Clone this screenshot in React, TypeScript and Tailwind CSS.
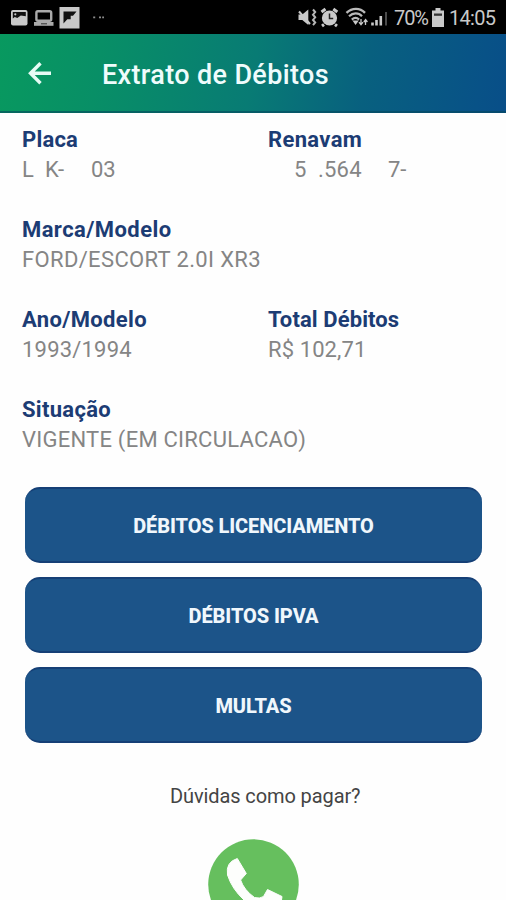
import React from "react";

type FieldProps = {
  label: string;
  labelClass?: string;
  valueClass?: string;
  children: React.ReactNode;
};

const Field = ({ label, labelClass, valueClass, children }: FieldProps) => (
  <div className="h-[90px]">
    <div
      className={`h-[30px] text-[22px] leading-[31px] font-bold text-[#1c3c74] whitespace-nowrap ${labelClass ?? ""}`}
    >
      {label}
    </div>
    <div
      className={`h-[31px] text-[22px] leading-[31px] text-[#858585] whitespace-nowrap ${valueClass ?? ""}`}
    >
      {children}
    </div>
  </div>
);

const StatusBar = () => (
  <div className="flex h-[34px] items-center bg-black text-[#c9c9c9]">
    <svg width="110" height="34" viewBox="0 0 110 34" fill="none">
      {/* imagen */}
      <rect x="11" y="10" width="16.5" height="15.5" rx="2" fill="#c9c9c9" />
      <path d="M12.8 12h13v4.3l-5-.8-3.500 2.500-2.500-1-2 1.500z" fill="#111" />
      <circle cx="15.3" cy="14.3" r="1.1" fill="#c9c9c9" />
      {/* laptop */}
      <rect x="36.4" y="11.2" width="14.8" height="9.6" rx="1.5" stroke="#aaa" strokeWidth="2.4" />
      <path d="M34 22h19.5v3.800H34z" fill="#aaa" />
      <path d="M41 23.8h6" stroke="#333" />
      {/* flipboard */}
      <rect x="59.5" y="7" width="20" height="21.5" fill="#c9c9c9" />
      <path d="M63.500 11.500h13l-3.500 4.300h-2.300v3.400h-3.400l-3.800 4.300z" fill="#111" />
      <path d="M93.2 17.3h2M99 17.3h2M102.2 17.3h1.8" stroke="#8c8c8c" strokeWidth="1.8" />
    </svg>
    <svg className="ml-auto" width="92" height="34" viewBox="296 0 92 34" fill="none">
      {/* vibrar */}
      <path d="M297.500 14.500h3.800l6-5v15.500l-6-5h-3.800z" fill="#c9c9c9" />
      <path d="M298 11.500l11 12.500" stroke="#c9c9c9" strokeWidth="2" />
      <path d="M312 9.500l2.200 2.600-2.200 2.600 2.200 2.600-2.200 2.600 2.200 2.600-2.200 2.600" stroke="#b5b5b5" strokeWidth="2" />
      {/* alarma */}
      <path d="M320.500 12l4-3M336.300 12l-4-3M323 24.500l-2 1.500M334 24.500l2 1.500" stroke="#c9c9c9" strokeWidth="3" />
      <circle cx="328.5" cy="18" r="7.6" fill="#c9c9c9" />
      <path d="M328.500 13.500v5h3.700" stroke="#222" strokeWidth="1.5" />
      {/* wifi */}
      <path d="M345.500 12.800c5.500-5.200 13.500-5.200 18.500 0" stroke="#b9b9b9" strokeWidth="2.4" />
      <path d="M348 16.300c4-3.800 9.500-3.800 13 0M350.800 19.600c2.500-2.200 5-2.200 7.300 0" stroke="#b9b9b9" strokeWidth="2.2" />
      <path d="M351.500 20.600h6.200l-3.100 4.400z" fill="#c9c9c9" />
      <path d="M360 19v5.500M358 22.200l2 2.600 2-2.600M364.500 25v-5M362.800 22l1.800-2.500 1.800 2.500" stroke="#c9c9c9" strokeWidth="1.3" />
      {/* señal */}
      <path d="M371.500 22.500v3M375.500 20v5.500M379.800 16v9.500" stroke="#c9c9c9" strokeWidth="2.6" />
      <path d="M385 12v13.500" stroke="#4b4b4b" strokeWidth="2" />
    </svg>
    <span className="ml-[5px] w-[33px] text-[20px] leading-[34px] tracking-[-1.1px] pt-[2px]">70%</span>
    <svg className="ml-[4px]" width="14" height="34" viewBox="0 0 14 34">
      <path d="M4.500 8h5v2.500H13V27H1V10.500h3.500z" fill="#c9c9c9" />
      <path d="M3 13.500h8v2.300H3z" fill="#333" />
    </svg>
    <span className="ml-[4px] mr-[10px] w-[47px] text-[20px] leading-[34px] tracking-[-0.7px] pt-[2px]">14:05</span>
  </div>
);

const Header = () => (
  <header className="flex h-[79px] items-center border-b-2 border-[#05485e]/60 bg-[linear-gradient(100deg,#08995f_0%,#088f66_20%,#087b74_50%,#08607f_72%,#085287_94%,#084e88_100%)] bg-origin-border text-[#effcfc]">
    <svg className="ml-[28px]" width="24" height="24" viewBox="0 0 24 24" fill="none" stroke="#e6fbf5" strokeWidth="3.4">
      <path d="M23 12.300H3M12.500 2.300L2.500 12.300l10 10" />
    </svg>
    <h1 className="ml-[50px] pt-[4px] text-[27px] leading-[32px] font-medium tracking-[0.35px] whitespace-nowrap">
      Extrato de Débitos
    </h1>
  </header>
);

const DebtButton = ({ text }: { text: string }) => (
  <button
    type="button"
    className="flex h-[76px] w-full items-center justify-center rounded-[15px] border-y-2 border-[#153f76] bg-[#1c5489] pt-[1px] text-[20px] font-extrabold tracking-[-0.1px] text-[#f0f7fc]"
  >
    {text}
  </button>
);

const App = () => {
  return (
    <div className="h-[900px] w-[506px] overflow-hidden bg-[#fefefe] font-[Roboto,sans-serif]">
      <StatusBar />
      <Header />

      <main>
        <div className="grid grid-cols-[246px_1fr] pt-[11px] pl-[22px]">
          <Field label="Placa" labelClass="tracking-[0.2px]">
            <span className="inline-block w-[23px]">L</span>
            <span className="inline-block w-[46px]">K-</span>
            <span>03</span>
          </Field>
          <Field label="Renavam" labelClass="tracking-[0.35px]">
            <span className="ml-[26px] inline-block w-[24px]">5</span>
            <span className="inline-block w-[70px] tracking-[0.2px]">.564</span>
            <span>7-</span>
          </Field>
          <div className="col-span-2">
            <Field label="Marca/Modelo" labelClass="tracking-[0.42px]" valueClass="tracking-[0.35px]">
              FORD/ESCORT 2.0I XR3
            </Field>
          </div>
          <Field label="Ano/Modelo" labelClass="tracking-[0.35px]" valueClass="tracking-[0.2px]">
            1993/1994
          </Field>
          <Field label="Total Débitos" labelClass="tracking-[0.1px]" valueClass="tracking-[0.1px]">
            R$ 102,71
          </Field>
          <div className="col-span-2">
            <Field label="Situação" labelClass="tracking-[0.3px]" valueClass="tracking-[0.24px]">
              VIGENTE (EM CIRCULACAO)
            </Field>
          </div>
        </div>

        <div className="mt-[3px] ml-[25px] flex w-[457px] flex-col gap-[14px]">
          <DebtButton text="DÉBITOS LICENCIAMENTO" />
          <DebtButton text="DÉBITOS IPVA" />
          <DebtButton text="MULTAS" />
        </div>

        <p className="mt-[38px] ml-[170px] text-[20px] leading-[30px] tracking-[-0.1px] text-[#444] whitespace-nowrap">
          Dúvidas como pagar?
        </p>
        <svg className="mt-[28px] ml-[208px]" width="91" height="91" viewBox="208 839 91 91">
          <circle cx="253.5" cy="884.5" r="45.3" fill="#66bf5e" />
          <path
            d="M237.300 858.500L246.300 873.500L240.600 880Q244 890 254.500 897.500Q260 899 263.500 896.500L267.500 889.500L282 896.500Q282 906 272 909Q259 912 244 900Q232 889 227.500 875Q225.500 862 237.300 858.500z"
            fill="#fdfefc"
            stroke="#fdfefc"
            strokeLinejoin="round"
          />
        </svg>
      </main>
    </div>
  );
};

export default App;
